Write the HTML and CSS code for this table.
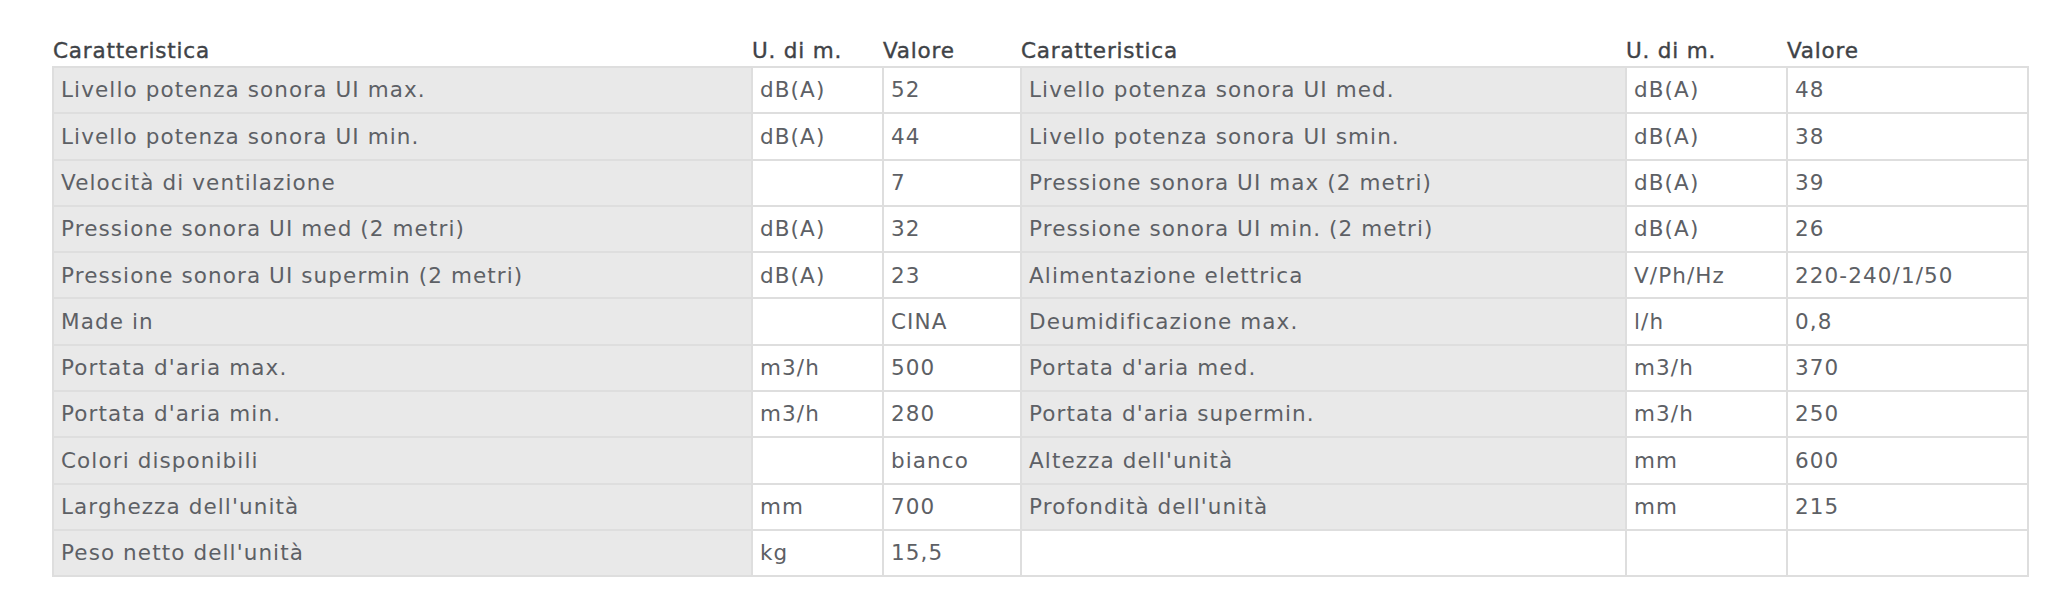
FILE: index.html
```html
<!DOCTYPE html>
<html lang="it">
<head>
<meta charset="utf-8">
<title>Caratteristiche</title>
<link rel="stylesheet" href="styles.css">
</head>
<body>
<div class="page">
<table class="specs">
  <colgroup>
    <col class="c-name"><col class="c-unit"><col class="c-val">
    <col class="c-name2"><col class="c-unit2"><col class="c-val2">
  </colgroup>
  <thead>
    <tr>
      <th>Caratteristica</th><th>U. di m.</th><th>Valore</th>
      <th>Caratteristica</th><th>U. di m.</th><th>Valore</th>
    </tr>
  </thead>
  <tbody>
    <tr><td class="name">Livello potenza sonora UI max.</td><td>dB(A)</td><td>52</td><td class="name">Livello potenza sonora UI med.</td><td>dB(A)</td><td>48</td></tr>
    <tr><td class="name">Livello potenza sonora UI min.</td><td>dB(A)</td><td>44</td><td class="name">Livello potenza sonora UI smin.</td><td>dB(A)</td><td>38</td></tr>
    <tr><td class="name">Velocità di ventilazione</td><td></td><td>7</td><td class="name">Pressione sonora UI max (2 metri)</td><td>dB(A)</td><td>39</td></tr>
    <tr><td class="name">Pressione sonora UI med (2 metri)</td><td>dB(A)</td><td>32</td><td class="name">Pressione sonora UI min. (2 metri)</td><td>dB(A)</td><td>26</td></tr>
    <tr><td class="name">Pressione sonora UI supermin (2 metri)</td><td>dB(A)</td><td>23</td><td class="name">Alimentazione elettrica</td><td>V/Ph/Hz</td><td>220-240/1/50</td></tr>
    <tr><td class="name">Made in</td><td></td><td>CINA</td><td class="name">Deumidificazione max.</td><td>l/h</td><td>0,8</td></tr>
    <tr><td class="name">Portata d'aria max.</td><td>m3/h</td><td>500</td><td class="name">Portata d'aria med.</td><td>m3/h</td><td>370</td></tr>
    <tr><td class="name">Portata d'aria min.</td><td>m3/h</td><td>280</td><td class="name">Portata d'aria supermin.</td><td>m3/h</td><td>250</td></tr>
    <tr><td class="name">Colori disponibili</td><td></td><td>bianco</td><td class="name">Altezza dell'unità</td><td>mm</td><td>600</td></tr>
    <tr><td class="name">Larghezza dell'unità</td><td>mm</td><td>700</td><td class="name">Profondità dell'unità</td><td>mm</td><td>215</td></tr>
    <tr><td class="name">Peso netto dell'unità</td><td>kg</td><td>15,5</td><td class="empty"></td><td></td><td></td></tr>
  </tbody>
</table>
</div>
</body>
</html>
```

FILE: styles.css
```css
html, body {
  margin: 0;
  padding: 0;
  background: #ffffff;
}

.page {
  padding: 36px 0 0 52px;
  font-family: "DejaVu Sans", Inter, sans-serif;
}

.specs {
  width: 1975px;
  border-collapse: collapse;
  table-layout: fixed;
  font-size: 21.5px;
  letter-spacing: 1.1px;
  color: #5d6065;
}

.c-name { width: 699px; }
.c-unit { width: 131px; }
.c-val { width: 138px; }
.c-name2 { width: 605px; }
.c-unit2 { width: 161px; }
.c-val2 { width: 241px; }

.specs th {
  text-align: left;
  font-weight: normal;
  letter-spacing: 0.8px;
  color: #3f4347;
  -webkit-text-stroke: 0.4px #3f4347;
  height: 30px;
  padding: 0;
  vertical-align: middle;
  line-height: 1;
}

.specs td {
  height: 44.3px;
  padding: 0 7px;
  border: 2px solid #dedede;
  vertical-align: middle;
  white-space: nowrap;
  line-height: 1;
}

.specs td.name {
  background: #e9e9e9;
}

.specs td.empty {
  background: #ffffff;
}
```
